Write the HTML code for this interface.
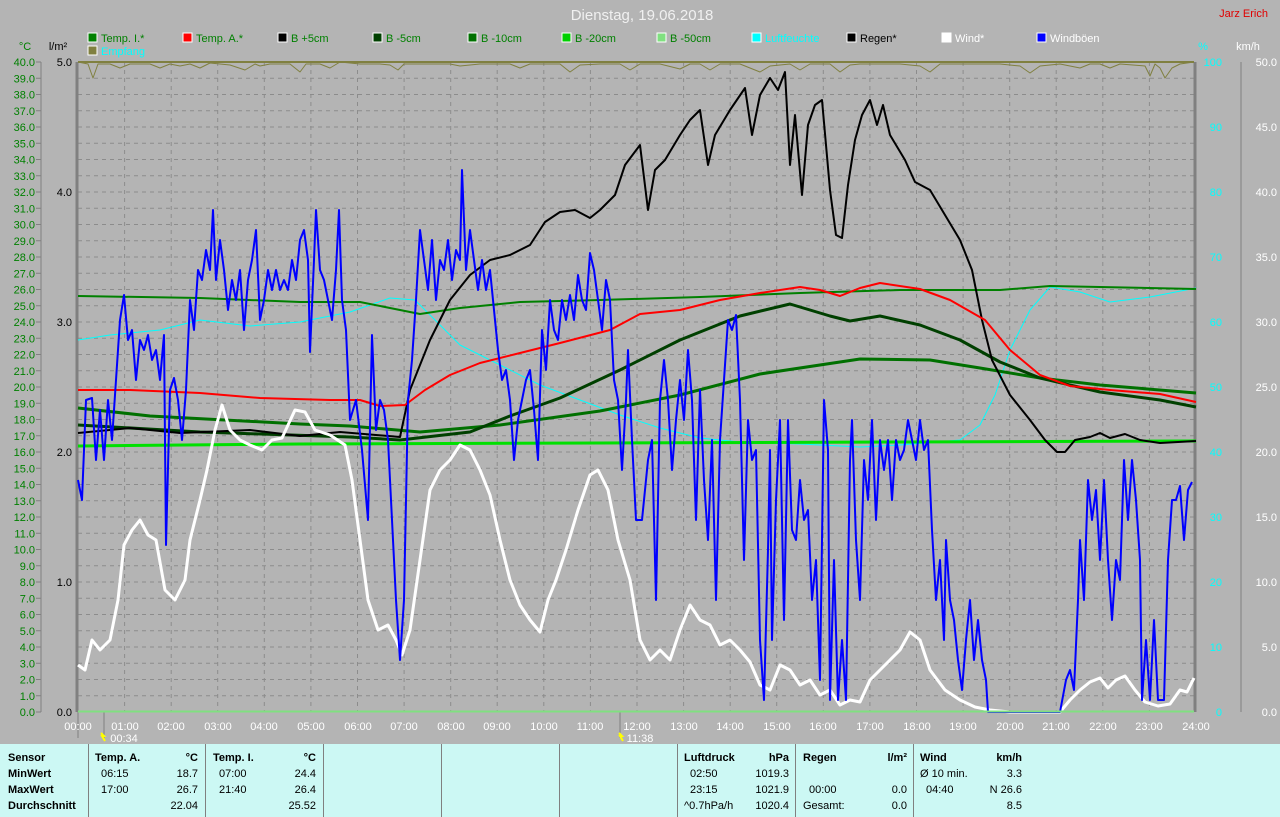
<!DOCTYPE html>
<html><head><meta charset="utf-8"><style>
html,body{margin:0;padding:0;background:#b4b4b4;width:1280px;height:817px;overflow:hidden;font-family:"Liberation Sans",sans-serif}
svg{position:absolute;left:0;top:0}
.t{position:absolute;font-size:11px;font-weight:bold;color:#000;white-space:pre}
.n{font-weight:normal}
</style></head><body>
<svg width="1280" height="817" xmlns="http://www.w3.org/2000/svg" font-family="Liberation Sans, sans-serif">
<text x="642" y="20" fill="#f0f0f0" font-size="15" text-anchor="middle">Dienstag, 19.06.2018</text>
<text x="1268" y="17" fill="#e00000" font-size="11" text-anchor="end">Jarz Erich</text>
<g font-size="11">
<rect x="88" y="33" width="9" height="9" fill="#008000" stroke="#fff"/><text x="101" y="42" fill="#008000">Temp. I.*</text>
<rect x="183" y="33" width="9" height="9" fill="#f00" stroke="#fff"/><text x="196" y="42" fill="#008000">Temp. A.*</text>
<rect x="278" y="33" width="9" height="9" fill="#000" stroke="#fff"/><text x="291" y="42" fill="#008000">B +5cm</text>
<rect x="373" y="33" width="9" height="9" fill="#004000" stroke="#fff"/><text x="386" y="42" fill="#008000">B -5cm</text>
<rect x="468" y="33" width="9" height="9" fill="#007000" stroke="#fff"/><text x="481" y="42" fill="#008000">B -10cm</text>
<rect x="562" y="33" width="9" height="9" fill="#00d000" stroke="#fff"/><text x="575" y="42" fill="#008000">B -20cm</text>
<rect x="657" y="33" width="9" height="9" fill="#80e080" stroke="#fff"/><text x="670" y="42" fill="#008000">B -50cm</text>
<rect x="752" y="33" width="9" height="9" fill="#0ff" stroke="#fff"/><text x="765" y="42" fill="#0ff">Luftfeuchte</text>
<rect x="847" y="33" width="9" height="9" fill="#000" stroke="#fff"/><text x="860" y="42" fill="#000">Regen*</text>
<rect x="942" y="33" width="9" height="9" fill="#fff" stroke="#fff"/><text x="955" y="42" fill="#fff">Wind*</text>
<rect x="1037" y="33" width="9" height="9" fill="#00f" stroke="#fff"/><text x="1050" y="42" fill="#fff">Windböen</text>
<rect x="88" y="46" width="9" height="9" fill="#808040" stroke="#fff"/><text x="101" y="55" fill="#0ff">Empfang</text>
<text x="25" y="50" fill="#008000" text-anchor="middle">°C</text>
<text x="58" y="50" fill="#000" text-anchor="middle">l/m²</text>
<text x="1203" y="50" fill="#0ff" text-anchor="middle">%</text>
<text x="1248" y="50" fill="#fff" text-anchor="middle">km/h</text>
</g>
<g id="grid" stroke="#8c8c8c" stroke-dasharray="4,4" stroke-width="1">
<path d="M78 78.25H1194M78 94.5H1194M78 110.75H1194M78 127H1194M78 143.25H1194M78 159.5H1194M78 175.75H1194M78 192H1194M78 208.25H1194M78 224.5H1194M78 240.75H1194M78 257H1194M78 273.25H1194M78 289.5H1194M78 305.75H1194M78 322H1194M78 338.25H1194M78 354.5H1194M78 370.75H1194M78 387H1194M78 403.25H1194M78 419.5H1194M78 435.75H1194M78 452H1194M78 468.25H1194M78 484.5H1194M78 500.75H1194M78 517H1194M78 533.25H1194M78 549.5H1194M78 565.75H1194M78 582H1194M78 598.25H1194M78 614.5H1194M78 630.75H1194M78 647H1194M78 663.25H1194M78 679.5H1194M78 695.75H1194"/>
<path d="M124.6 62V712M171.2 62V712M217.7 62V712M264.3 62V712M310.9 62V712M357.5 62V712M404.1 62V712M450.7 62V712M497.2 62V712M543.8 62V712M590.4 62V712M637 62V712M683.6 62V712M730.2 62V712M776.7 62V712M823.3 62V712M869.9 62V712M916.5 62V712M963.1 62V712M1009.7 62V712M1056.2 62V712M1102.8 62V712M1149.4 62V712"/>
</g>
<path d="M77 62V712M1195 62V712" stroke="#808080" stroke-width="3"/>
<path d="M41 62V712" stroke="#808080"/>
<path d="M1241 62V712" stroke="#808080"/>
<g font-size="11" fill="#008000" text-anchor="end" id="cl"></g>
<g stroke="#808080"><path d="M78 712V738M104 712V738M620 712V738"/></g>
<g font-size="11" fill="#fff" text-anchor="middle">
<text x="78" y="730">00:00</text><text x="125" y="730">01:00</text><text x="171" y="730">02:00</text><text x="218" y="730">03:00</text><text x="264" y="730">04:00</text><text x="311" y="730">05:00</text><text x="358" y="730">06:00</text><text x="404" y="730">07:00</text><text x="451" y="730">08:00</text><text x="497" y="730">09:00</text><text x="544" y="730">10:00</text><text x="590" y="730">11:00</text><text x="637" y="730">12:00</text><text x="684" y="730">13:00</text><text x="730" y="730">14:00</text><text x="777" y="730">15:00</text><text x="823" y="730">16:00</text><text x="870" y="730">17:00</text><text x="917" y="730">18:00</text><text x="963" y="730">19:00</text><text x="1010" y="730">20:00</text><text x="1056" y="730">21:00</text><text x="1103" y="730">22:00</text><text x="1149" y="730">23:00</text><text x="1196" y="730">24:00</text>
<text x="124" y="742">00:34</text><text x="640" y="742">11:38</text>
</g>
<path d="M101 733l3 3-2 0 3 5" stroke="#ff0" stroke-width="2" fill="none"/>
<path d="M619 733l3 3-2 0 3 5" stroke="#ff0" stroke-width="2" fill="none"/>
<g font-size="11" text-anchor="end">
<text x="72" y="66">5.0</text><text x="72" y="196">4.0</text><text x="72" y="326">3.0</text><text x="72" y="456">2.0</text><text x="72" y="586">1.0</text><text x="72" y="716">0.0</text>
</g>
<g font-size="11" fill="#0ff" text-anchor="end">
<text x="1222" y="66">100</text><text x="1222" y="131">90</text><text x="1222" y="196">80</text><text x="1222" y="261">70</text><text x="1222" y="326">60</text><text x="1222" y="391">50</text><text x="1222" y="456">40</text><text x="1222" y="521">30</text><text x="1222" y="586">20</text><text x="1222" y="651">10</text><text x="1222" y="716">0</text>
</g>
<g font-size="11" fill="#fff" text-anchor="end">
<text x="1277" y="66">50.0</text><text x="1277" y="131">45.0</text><text x="1277" y="196">40.0</text><text x="1277" y="261">35.0</text><text x="1277" y="326">30.0</text><text x="1277" y="391">25.0</text><text x="1277" y="456">20.0</text><text x="1277" y="521">15.0</text><text x="1277" y="586">10.0</text><text x="1277" y="651">5.0</text><text x="1277" y="716">0.0</text>
</g>
<g fill="none" stroke-linejoin="round">
<path d="M78 62H1194" stroke="#808040" stroke-width="2"/>
<polyline stroke="#808040" points="78,62 88,64 93,78 98,64 110,64 120,68 130,64 150,64 160,68 170,64 180,66 190,64 200,68 210,63 230,65 245,70 255,64 260,66 270,64 290,64 300,72 306,64 320,64 330,68 340,62 360,64 380,64 390,65 398,70 404,64 420,64 450,64 460,66 480,64 510,64 520,68 530,64 560,64 570,72 580,65 600,64 620,64 630,70 640,64 660,64 680,69 690,64 700,64 710,70 720,64 740,64 760,72 770,66 790,64 800,70 810,64 830,64 840,72 850,65 860,64 880,64 900,64 920,66 930,72 940,64 960,64 980,64 1000,64 1020,66 1030,73 1040,66 1060,64 1080,68 1090,64 1100,64 1110,68 1120,64 1145,66 1150,76 1155,64 1160,68 1165,78 1172,68 1180,64 1194,62"/>
<polyline stroke="#0ff" points="78,340 110,335 160,330 200,320 250,326 300,322 350,312 390,298 415,300 430,315 460,345 500,365 540,385 580,400 620,415 660,428 700,438 740,442 800,444 860,447 900,445 960,440 980,425 995,395 1010,350 1030,310 1050,287 1080,292 1110,302 1150,297 1196,288"/>
<polyline stroke="#00e000" stroke-width="3" points="78,446 300,444 600,443 900,442 1196,441"/>
<polyline stroke="#007000" stroke-width="3" points="78,408 150,416 300,424 350,426 420,432 500,425 600,411 680,395 760,374 860,359 930,360 980,368 1040,378 1100,385 1196,393"/>
<polyline stroke="#008000" stroke-width="2" points="78,296 200,298 300,302 360,302 390,308 420,314 460,308 520,302 600,300 700,297 800,293 900,290 1000,290 1050,286 1100,287 1196,289"/>
<polyline stroke="#004000" stroke-width="3" points="78,425 200,432 350,437 400,440 470,432 510,416 560,398 620,370 680,340 740,316 790,304 830,316 850,321 880,316 920,325 960,340 1000,362 1040,378 1100,392 1160,400 1196,407"/>
<polyline stroke="#000" stroke-width="2" points="78,433 130,428 180,433 250,430 300,436 340,432 400,437 410,390 430,340 450,300 470,275 490,260 510,255 530,245 545,222 560,212 575,210 590,218 600,210 615,195 625,165 640,145 648,210 655,170 665,160 680,135 690,120 700,110 708,165 715,135 730,110 745,88 752,135 760,95 770,78 778,90 785,72 790,165 795,115 802,195 808,125 815,105 822,100 830,190 836,235 842,238 848,185 855,140 862,115 870,100 877,125 883,105 890,135 905,160 915,182 930,190 945,215 960,240 972,270 982,320 992,360 1010,395 1030,420 1045,440 1057,452 1065,452 1075,440 1090,437 1100,433 1110,438 1125,434 1140,440 1160,443 1196,441"/>
<polyline stroke="#f00" stroke-width="2" points="78,390 130,390 200,393 260,398 330,400 360,400 380,406 405,405 425,390 450,375 480,363 520,353 560,343 610,330 640,314 680,310 720,300 760,293 800,287 820,290 840,296 860,288 880,283 920,289 950,300 985,320 1010,350 1040,375 1070,386 1110,390 1160,394 1196,402"/>
<polyline stroke="#fff" stroke-width="3" points="78,665 85,670 92,640 100,650 110,640 118,600 124,545 132,530 140,520 148,535 156,540 165,590 175,600 185,580 190,540 200,500 207,470 215,430 222,405 230,430 240,440 250,445 262,450 272,440 282,438 295,410 305,412 315,430 330,435 345,445 352,480 360,540 368,600 378,630 388,625 396,640 402,655 410,630 420,560 430,490 440,470 450,460 460,445 470,450 480,470 490,495 500,540 510,580 520,605 530,620 540,632 548,600 556,580 566,550 578,510 590,475 598,470 608,490 618,540 630,580 640,640 650,660 660,650 670,660 680,630 690,605 700,620 710,625 720,645 730,640 740,650 750,662 760,685 770,690 780,665 790,670 800,685 810,680 820,695 830,690 840,705 850,700 860,702 870,680 880,670 890,660 900,650 910,632 920,640 930,670 945,690 960,700 975,707 990,710 1010,712 1060,712 1070,700 1080,690 1090,682 1100,678 1108,688 1116,680 1125,676 1135,690 1145,702 1158,706 1170,704 1180,690 1187,692 1194,678"/>
<polyline stroke="#00f" stroke-width="2" points="78,480 82,500 86,400 92,398 96,460 100,410 104,460 108,400 112,440 116,380 120,320 124,295 128,340 132,330 136,380 140,340 144,350 148,335 152,360 156,350 160,380 164,335 166,545 170,390 174,378 178,400 182,440 186,390 190,300 194,330 198,270 202,280 206,250 210,270 213,210 216,280 220,240 224,270 228,310 232,280 236,300 240,270 244,330 248,280 252,260 256,230 260,320 264,300 268,270 272,290 276,270 280,290 284,280 288,290 292,260 296,280 300,240 304,230 308,260 310,352 314,260 316,210 320,270 324,280 328,300 332,320 336,270 339,210 342,300 346,330 350,420 356,400 362,450 368,520 372,335 376,430 380,400 384,410 388,440 392,520 396,600 400,660 404,600 408,400 412,360 416,300 420,230 424,260 428,290 432,240 436,300 440,260 444,270 448,240 452,280 456,250 460,260 462,170 466,270 470,230 474,260 478,290 482,260 486,290 490,270 494,310 498,350 502,380 506,370 510,400 514,460 518,420 522,400 526,380 530,370 534,410 538,460 542,330 546,370 550,300 554,330 558,340 562,300 566,320 570,295 574,320 578,275 582,300 586,310 590,253 594,270 598,300 602,330 606,280 610,300 614,380 618,400 622,470 626,400 628,350 632,440 636,520 642,520 648,460 652,440 656,600 660,400 664,360 668,400 672,470 676,420 680,380 684,420 688,350 692,400 696,520 700,390 704,480 708,540 712,440 716,600 720,440 724,380 728,320 732,330 736,315 740,400 744,560 748,420 752,460 756,450 760,640 764,700 768,550 770,450 772,640 776,500 780,420 784,620 788,420 792,530 796,540 800,480 804,520 808,510 812,600 816,560 820,680 824,400 828,450 830,700 834,560 838,700 842,640 846,700 850,460 852,420 856,540 860,600 864,460 868,500 872,420 876,520 880,440 884,470 888,440 892,500 896,440 900,460 904,450 908,420 912,440 916,460 920,420 924,450 928,440 932,530 936,600 940,560 944,640 946,540 950,600 954,620 958,660 962,690 966,640 970,600 974,660 978,620 982,660 986,680 988,712 1060,712 1066,680 1070,670 1074,690 1078,600 1080,540 1084,600 1088,480 1092,520 1096,490 1100,560 1104,480 1108,560 1112,620 1116,560 1120,580 1124,460 1128,520 1132,460 1136,500 1140,560 1142,700 1146,640 1150,700 1154,620 1158,700 1164,700 1168,560 1172,500 1176,500 1180,486 1184,540 1188,490 1192,482"/>
<path d="M78 711.5H1194" stroke="#80e080" stroke-width="2"/>
</g>
<rect x="0" y="744" width="1280" height="73" fill="#ccf8f4"/>
<path d="M88.5 744V817M205.5 744V817M323.5 744V817M441.5 744V817M559.5 744V817M677.5 744V817M795.5 744V817M913.5 744V817" stroke="#808080"/>
</svg>
<script>
var g=document.getElementById('cl'),s='';
for(var i=0;i<=40;i++){var y=62+i*16.25;s+='<text x="35" y="'+(y+4)+'">'+(40-i).toFixed(1)+'</text><path d="M36 '+y+'H41" stroke="#808080"/>';}
g.innerHTML=s;
</script>
<div class="t" style="left:8px;top:752px">Sensor</div>
<div class="t" style="left:8px;top:768px">MinWert</div>
<div class="t" style="left:8px;top:784px">MaxWert</div>
<div class="t" style="left:8px;top:800px">Durchschnitt</div>
<div class="t" style="left:95px;top:752px">Temp. A.</div><div class="t" style="left:170px;top:752px;width:28px;text-align:right">°C</div>
<div class="t n" style="left:101px;top:768px">06:15</div><div class="t n" style="left:160px;top:768px;width:38px;text-align:right">18.7</div>
<div class="t n" style="left:101px;top:784px">17:00</div><div class="t n" style="left:160px;top:784px;width:38px;text-align:right">26.7</div>
<div class="t n" style="left:160px;top:800px;width:38px;text-align:right">22.04</div>
<div class="t" style="left:213px;top:752px">Temp. I.</div><div class="t" style="left:288px;top:752px;width:28px;text-align:right">°C</div>
<div class="t n" style="left:219px;top:768px">07:00</div><div class="t n" style="left:278px;top:768px;width:38px;text-align:right">24.4</div>
<div class="t n" style="left:219px;top:784px">21:40</div><div class="t n" style="left:278px;top:784px;width:38px;text-align:right">26.4</div>
<div class="t n" style="left:278px;top:800px;width:38px;text-align:right">25.52</div>
<div class="t" style="left:684px;top:752px">Luftdruck</div><div class="t" style="left:750px;top:752px;width:39px;text-align:right">hPa</div>
<div class="t n" style="left:690px;top:768px">02:50</div><div class="t n" style="left:740px;top:768px;width:49px;text-align:right">1019.3</div>
<div class="t n" style="left:690px;top:784px">23:15</div><div class="t n" style="left:740px;top:784px;width:49px;text-align:right">1021.9</div>
<div class="t n" style="left:684px;top:800px">^0.7hPa/h</div><div class="t n" style="left:740px;top:800px;width:49px;text-align:right">1020.4</div>
<div class="t" style="left:803px;top:752px">Regen</div><div class="t" style="left:870px;top:752px;width:37px;text-align:right">l/m²</div>
<div class="t n" style="left:809px;top:784px">00:00</div><div class="t n" style="left:870px;top:784px;width:37px;text-align:right">0.0</div>
<div class="t n" style="left:803px;top:800px">Gesamt:</div><div class="t n" style="left:870px;top:800px;width:37px;text-align:right">0.0</div>
<div class="t" style="left:920px;top:752px">Wind</div><div class="t" style="left:980px;top:752px;width:42px;text-align:right">km/h</div>
<div class="t n" style="left:920px;top:768px">Ø 10 min.</div><div class="t n" style="left:980px;top:768px;width:42px;text-align:right">3.3</div>
<div class="t n" style="left:926px;top:784px">04:40</div><div class="t n" style="left:980px;top:784px;width:42px;text-align:right">N 26.6</div>
<div class="t n" style="left:980px;top:800px;width:42px;text-align:right">8.5</div>
</body></html>
